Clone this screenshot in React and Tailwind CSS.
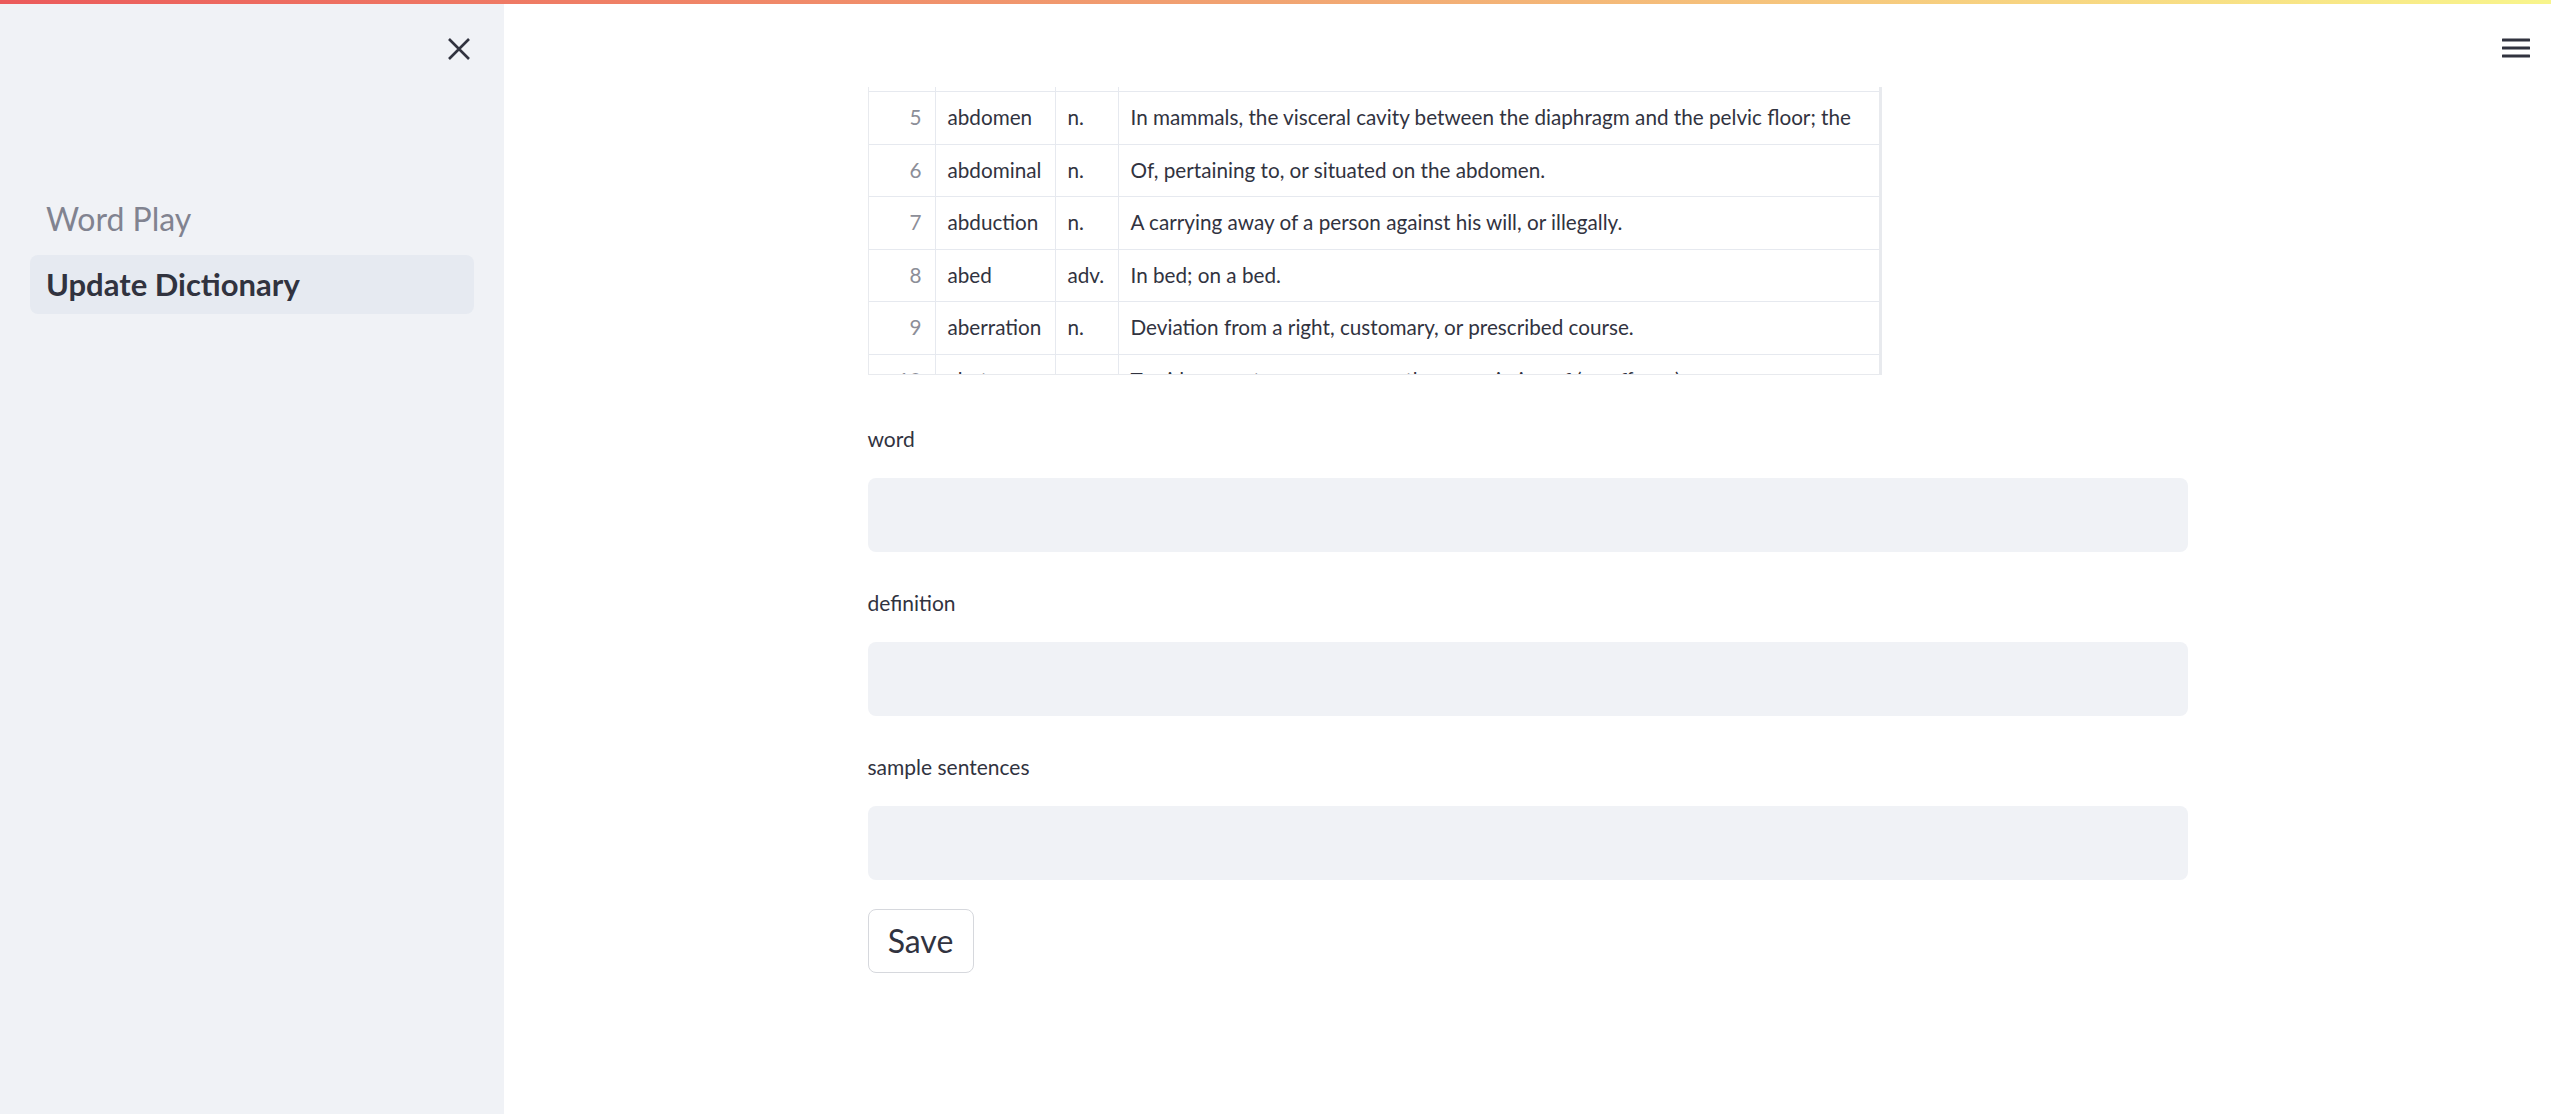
import React from 'react';

const rows = [
  { i: 4, word: '', pos: '', def: '' },
  { i: 5, word: 'abdomen', pos: 'n.', def: 'In mammals, the visceral cavity between the diaphragm and the pelvic floor; the' },
  { i: 6, word: 'abdominal', pos: 'n.', def: 'Of, pertaining to, or situated on the abdomen.' },
  { i: 7, word: 'abduction', pos: 'n.', def: 'A carrying away of a person against his will, or illegally.' },
  { i: 8, word: 'abed', pos: 'adv.', def: 'In bed; on a bed.' },
  { i: 9, word: 'aberration', pos: 'n.', def: 'Deviation from a right, customary, or prescribed course.' },
  { i: 10, word: 'abet', pos: 'v.', def: 'To aid, promote, or encourage the commission of (an offense).' },
];

const fields = ['word', 'definition', 'sample sentences'];

export default function App() {
  return (
    <div className="w-full h-[1114px] flex flex-col bg-white text-[#31333f] overflow-hidden" style={{ fontFamily: 'Lato, "Noto Sans", sans-serif' }}>
      {/* decoration bar */}
      <div className="h-[4px] w-full bg-gradient-to-r from-[#eb5a5b] via-[#f1a472] to-[#f8f58c]" />

      <div className="flex flex-1 min-h-0">
        {/* sidebar */}
        <aside className="w-[504px] shrink-0 bg-[#f0f2f6] flex flex-col px-[30px]">
          <div className="flex justify-end pt-[34px] pr-[4px]">
            <svg width="22" height="22" viewBox="0 0 22 22" fill="none" stroke="#31333f" strokeWidth="2.6" strokeLinecap="butt">
              <path d="M1 1L21 21M21 1L1 21" />
            </svg>
          </div>
          <nav className="mt-[132px] flex flex-col gap-[4px]">
            <div className="h-[59px] rounded-lg px-4 pb-[6px] flex items-center text-[32px] text-[#818390]">Word Play</div>
            <div className="h-[59px] rounded-lg px-4 flex items-center text-[31px] font-bold text-[#31333f] bg-[#e6eaf1]">Update Dictionary</div>
          </nav>
        </aside>

        {/* main */}
        <main className="flex-1 relative">
          <button className="absolute right-[21px] top-[34px] w-[28px] h-[20px]">
            <svg width="28" height="20" viewBox="0 0 28 20" fill="#31333f">
              <rect x="0" y="0.5" width="28" height="3" rx="0.5" />
              <rect x="0" y="8.5" width="28" height="3" rx="0.5" />
              <rect x="0" y="16.5" width="28" height="3" rx="0.5" />
            </svg>
          </button>

          <div className="w-[1320px] mx-auto pt-[83px]">
            {/* data table */}
            <div className="w-[1014px] h-[288px] overflow-hidden border-l border-b border-r-[3px] border-[#e8eaee]">
              <div className="-mt-[47.5px]">
                {rows.map((r) => (
                  <div key={r.i} className="h-[52.5px] grid grid-cols-[67px_120px_63px_1fr] border-b border-[#e6e9ef] text-[20.7px] whitespace-nowrap">
                    <div className="border-r border-[#e6e9ef] flex items-center justify-end pr-[13px] text-[#8c8e98]">{r.def ? r.i : ''}</div>
                    <div className="border-r border-[#e6e9ef] flex items-center pl-[12px] overflow-hidden">{r.word}</div>
                    <div className="border-r border-[#e6e9ef] flex items-center pl-[12px] overflow-hidden">{r.pos}</div>
                    <div className="flex items-center pl-[12px] overflow-hidden">{r.def}</div>
                  </div>
                ))}
              </div>
            </div>

            {/* form */}
            <div className="flex flex-col">
              {fields.map((f, idx) => (
                <div key={f} className={idx === 0 ? 'mt-[48px]' : 'mt-[35px]'}>
                  <div className="h-[31px] leading-[31px] text-[21px] text-[#31333f]">{f}</div>
                  <div className="mt-[24px] h-[74px] rounded-lg bg-[#f0f2f6]" />
                </div>
              ))}
              <div className="mt-[29px]">
                <button className="w-[106px] h-[64px] rounded-lg border border-[#d6d8dd] bg-white text-[32px] text-[#31333f] flex items-center justify-center">
                  Save
                </button>
              </div>
            </div>
          </div>
        </main>
      </div>
    </div>
  );
}
